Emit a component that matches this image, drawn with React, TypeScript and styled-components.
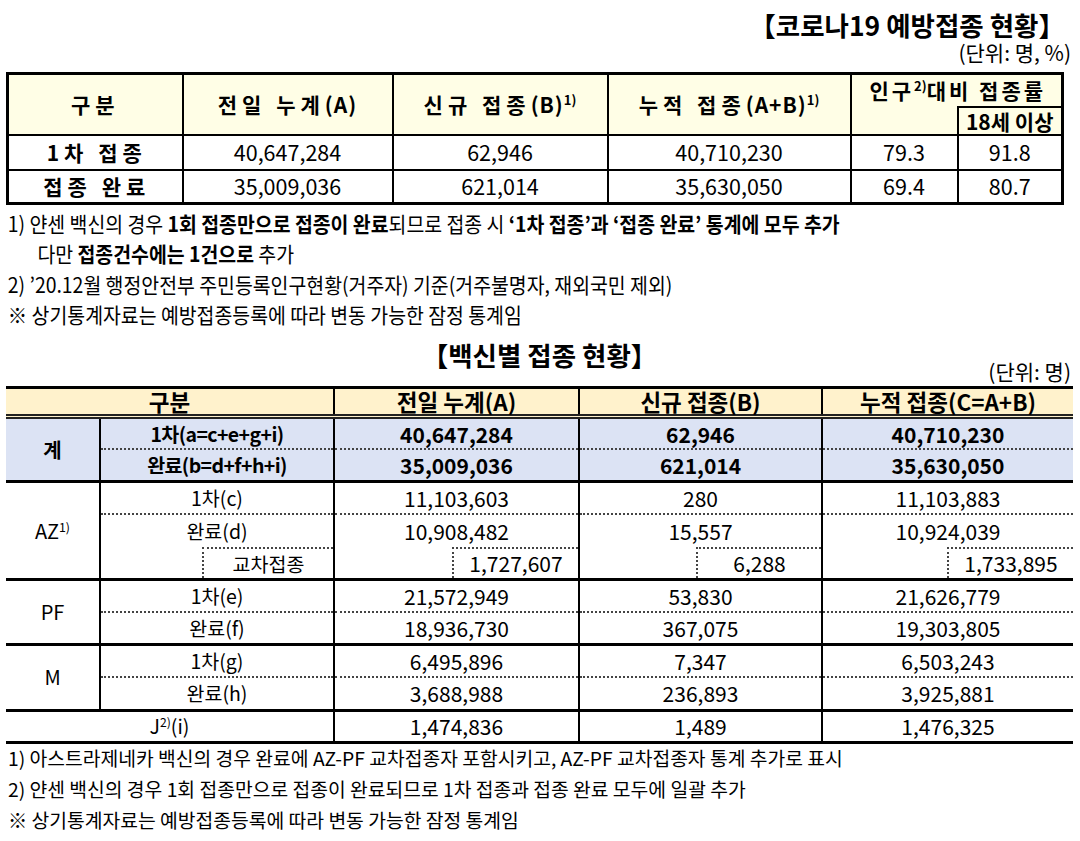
import React from "react";
import styled, { createGlobalStyle } from "styled-components";

const GlobalStyle = createGlobalStyle`
    html, body {
        margin: 0;
        padding: 0;
        background: #fff;
    }
    body {
        font-family: "Noto Sans CJK KR", "Noto Sans", sans-serif;
        color: #000;
    }
`;

const Page = styled.div`
    width: 1067px;
    padding: 10px 0 0 6px;
`;

const TopTitle = styled.div`
    padding-right: 8px;
    text-align: right;
    font-size: 26.5px;
    font-weight: 700;
    line-height: 30px;
`;

const Unit = styled.div`
    margin-top: 1px;
    padding-right: 2px;
    text-align: right;
    font-size: 21px;
    line-height: 22px;
`;

const Sup = styled.sup`
    font-size: 0.62em;
    line-height: 0;
    letter-spacing: 0;
    vertical-align: 0.6em;
`;

const Tight = styled.span`
    letter-spacing: 1px;
`;

/* ---------- summary table ---------- */

const SumTable = styled.table`
    width: 1055px;
    margin-top: 9px;
    border-collapse: collapse;
    table-layout: fixed;
    border: 3px solid #000;
`;

const SumRow = styled.tr<{ $h: number }>`
    height: ${(p) => p.$h}px;
`;

const SumHead = styled.th`
    padding: 0;
    border: 2px solid #000;
    background: #fffee6;
    font-size: 21px;
    font-weight: 700;
    line-height: 26px;
    letter-spacing: 5px;
    vertical-align: middle;
`;

const RateHead = styled(SumHead)`
    border-bottom: none;
    letter-spacing: 3px;
    padding-left: 3px;
`;

const BlankHead = styled.th`
    padding: 0;
    border-top: none;
    border-right: none;
    background: #fffee6;
    line-height: 20px;
`;

const AdultHead = styled.th`
    padding: 0;
    border: 2px solid #000;
    background: #fffee6;
    font-size: 21px;
    font-weight: 700;
    line-height: 24px;
`;

const SumLabel = styled.td`
    padding: 0 0 0 3px;
    border: 2px solid #000;
    text-align: center;
    font-size: 21px;
    font-weight: 700;
    line-height: 28px;
    letter-spacing: 5px;
`;

const SumValue = styled.td`
    padding: 0;
    border: 2px solid #000;
    text-align: center;
    font-size: 21.5px;
    line-height: 28px;
`;

/* ---------- notes ---------- */

const Notes = styled.div<{ $lh: number; $top: number; $size: number }>`
    margin-top: ${(p) => p.$top}px;
    font-size: ${(p) => p.$size}px;
    line-height: ${(p) => p.$lh}px;

    b {
        font-weight: 700;
    }
`;

const NoteLine = styled.div<{ $indent?: boolean; $narrow?: boolean }>`
    height: 1lh;
    padding-left: ${(p) => (p.$indent ? 34 : 2)}px;
    white-space: nowrap;
    transform: ${(p) => (p.$narrow ? "scaleX(0.924)" : "none")};
    transform-origin: left center;
`;

/* ---------- vaccine table ---------- */

const SectionHead = styled.div`
    display: grid;
    grid-template-columns: 1fr auto 1fr;
    height: 47px;
    margin-top: 10px;
`;

const SectionTitle = styled.div`
    grid-column: 2;
    align-self: start;
    font-size: 26.5px;
    font-weight: 700;
    line-height: 32px;
`;

const SectionUnit = styled.div`
    grid-column: 3;
    justify-self: end;
    align-self: end;
    margin-bottom: 4px;
    padding-right: 2px;
    font-size: 21px;
    line-height: 22px;
`;

const VaccineTable = styled.table`
    width: 1067px;
    border-collapse: collapse;
    table-layout: fixed;
    border-top: 3px solid #000;
    border-bottom: 3px solid #000;
`;

const VHead = styled.th`
    height: 25px;
    padding: 0;
    border-right: 2px solid #000;
    border-bottom: 5px double #222;
    background: #fff2cc;
    font-size: 22.5px;
    font-weight: 700;
    line-height: 25px;

    &:last-child {
        border-right: none;
    }
`;

const sepBorder = {
    group: "3px solid #000",
    dot: "2px dotted #444",
    none: "none",
};

const BodyRow = styled.tr<{ $sep: keyof typeof sepBorder; $total?: boolean }>`
    height: 32.6px;

    & > td {
        border-top: ${(p) => sepBorder[p.$sep]};
        background: ${(p) => (p.$total ? "#dce3f4" : "#fff")};
        font-weight: ${(p) => (p.$total ? 700 : 400)};
    }
`;

const Cell = styled.td`
    padding: 0;
    border-right: 2px solid #000;
    text-align: center;
    vertical-align: middle;
    font-size: 21px;
    line-height: 28px;

    &:last-child {
        border-right: none;
    }
`;

const LabelCell = styled(Cell)`
    font-size: 20px;
`;

const SubCell = styled(Cell)<{ $total?: boolean }>`
    font-size: 19.5px;
    letter-spacing: ${(p) => (p.$total ? "-0.6px" : "0")};
`;

const CrossCell = styled(Cell)`
    vertical-align: bottom;
`;

const CrossBox = styled.div<{ $w: number; $label?: boolean }>`
    box-sizing: border-box;
    width: ${(p) => p.$w}px;
    height: 31px;
    margin-left: auto;
    border-top: 2px dotted #444;
    border-left: 2px dotted #444;
    font-size: ${(p) => (p.$label ? "19.5px" : "21px")};
    line-height: 29px;
`;

/* ---------- data ---------- */

type Row = {
    sub: string;
    vals: string[];
    cross?: boolean;
};

type Group = {
    label: React.ReactNode;
    rows: Row[];
    total?: boolean;
};

const groups: Group[] = [
    {
        label: "계",
        total: true,
        rows: [
            { sub: "1차(a=c+e+g+i)", vals: ["40,647,284", "62,946", "40,710,230"] },
            { sub: "완료(b=d+f+h+i)", vals: ["35,009,036", "621,014", "35,630,050"] },
        ],
    },
    {
        label: (
            <>
                AZ<Sup>1)</Sup>
            </>
        ),
        rows: [
            { sub: "1차(c)", vals: ["11,103,603", "280", "11,103,883"] },
            { sub: "완료(d)", vals: ["10,908,482", "15,557", "10,924,039"] },
            { sub: "교차접종", vals: ["1,727,607", "6,288", "1,733,895"], cross: true },
        ],
    },
    {
        label: "PF",
        rows: [
            { sub: "1차(e)", vals: ["21,572,949", "53,830", "21,626,779"] },
            { sub: "완료(f)", vals: ["18,936,730", "367,075", "19,303,805"] },
        ],
    },
    {
        label: "M",
        rows: [
            { sub: "1차(g)", vals: ["6,495,896", "7,347", "6,503,243"] },
            { sub: "완료(h)", vals: ["3,688,988", "236,893", "3,925,881"] },
        ],
    },
];

// widths of the dotted "교차접종" boxes, per column
const crossWidths = [131, 126, 125, 126];

const App: React.FC = () => (
    <>
        <GlobalStyle />
        <Page>
            <TopTitle>【코로나19 예방접종 현황】</TopTitle>
            <Unit>(단위: 명, %)</Unit>

            <SumTable>
                <colgroup>
                    <col style={{ width: 175 }} />
                    <col style={{ width: 210 }} />
                    <col style={{ width: 215 }} />
                    <col style={{ width: 243 }} />
                    <col style={{ width: 107 }} />
                    <col style={{ width: 105 }} />
                </colgroup>
                <thead>
                    <SumRow $h={33}>
                        <SumHead rowSpan={2}>구분</SumHead>
                        <SumHead rowSpan={2}>
                            전일 누계<Tight>(A)</Tight>
                        </SumHead>
                        <SumHead rowSpan={2}>
                            신규 접종<Tight>(B)</Tight>
                            <Sup>1)</Sup>
                        </SumHead>
                        <SumHead rowSpan={2}>
                            누적 접종<Tight>(A+B)</Tight>
                            <Sup>1)</Sup>
                        </SumHead>
                        <RateHead colSpan={2}>
                            인구<Sup>2)</Sup>대비 접종률
                        </RateHead>
                    </SumRow>
                    <SumRow $h={28}>
                        <BlankHead />
                        <AdultHead>18세 이상</AdultHead>
                    </SumRow>
                </thead>
                <tbody>
                    <SumRow $h={35}>
                        <SumLabel>1차 접종</SumLabel>
                        <SumValue>40,647,284</SumValue>
                        <SumValue>62,946</SumValue>
                        <SumValue>40,710,230</SumValue>
                        <SumValue>79.3</SumValue>
                        <SumValue>91.8</SumValue>
                    </SumRow>
                    <SumRow $h={34}>
                        <SumLabel>접종 완료</SumLabel>
                        <SumValue>35,009,036</SumValue>
                        <SumValue>621,014</SumValue>
                        <SumValue>35,630,050</SumValue>
                        <SumValue>69.4</SumValue>
                        <SumValue>80.7</SumValue>
                    </SumRow>
                </tbody>
            </SumTable>

            <Notes $lh={30.3} $top={3} $size={21}>
                <NoteLine $narrow>
                    1) 얀센 백신의 경우 <b>1회 접종만으로 접종이 완료</b>되므로 접종 시{" "}
                    <b>‘1차 접종’과 ‘접종 완료’ 통계에 모두 추가</b>
                </NoteLine>
                <NoteLine $narrow $indent>
                    다만 <b>접종건수에는 1건으로</b> 추가
                </NoteLine>
                <NoteLine $narrow>
                    2) ’20.12월 행정안전부 주민등록인구현황(거주자) 기준(거주불명자, 재외국민 제외)
                </NoteLine>
                <NoteLine $narrow>※ 상기통계자료는 예방접종등록에 따라 변동 가능한 잠정 통계임</NoteLine>
            </Notes>

            <SectionHead>
                <SectionTitle>【백신별 접종 현황】</SectionTitle>
                <SectionUnit>(단위: 명)</SectionUnit>
            </SectionHead>

            <VaccineTable>
                <colgroup>
                    <col style={{ width: 94 }} />
                    <col style={{ width: 234 }} />
                    <col style={{ width: 245 }} />
                    <col style={{ width: 243 }} />
                    <col style={{ width: 251 }} />
                </colgroup>
                <thead>
                    <tr>
                        <VHead colSpan={2}>구분</VHead>
                        <VHead>전일 누계(A)</VHead>
                        <VHead>신규 접종(B)</VHead>
                        <VHead>누적 접종(C=A+B)</VHead>
                    </tr>
                </thead>
                <tbody>
                    {groups.map((g, gi) =>
                        g.rows.map((r, i) => (
                            <BodyRow
                                key={`${gi}-${i}`}
                                $sep={i === 0 ? "group" : r.cross ? "none" : "dot"}
                                $total={g.total}
                            >
                                {i === 0 && <LabelCell rowSpan={g.rows.length}>{g.label}</LabelCell>}
                                {r.cross ? (
                                    <CrossCell>
                                        <CrossBox $w={crossWidths[0]} $label>
                                            {r.sub}
                                        </CrossBox>
                                    </CrossCell>
                                ) : (
                                    <SubCell $total={g.total}>{r.sub}</SubCell>
                                )}
                                {r.vals.map((v, vi) =>
                                    r.cross ? (
                                        <CrossCell key={vi}>
                                            <CrossBox $w={crossWidths[vi + 1]}>{v}</CrossBox>
                                        </CrossCell>
                                    ) : (
                                        <Cell key={vi}>{v}</Cell>
                                    )
                                )}
                            </BodyRow>
                        ))
                    )}
                    <BodyRow $sep="group">
                        <SubCell colSpan={2}>
                            J<Sup>2)</Sup>(i)
                        </SubCell>
                        <Cell>1,474,836</Cell>
                        <Cell>1,489</Cell>
                        <Cell>1,476,325</Cell>
                    </BodyRow>
                </tbody>
            </VaccineTable>

            <Notes $lh={30.8} $top={-1} $size={19.3}>
                <NoteLine>
                    1) 아스트라제네카 백신의 경우 완료에 AZ-PF 교차접종자 포함시키고, AZ-PF 교차접종자 통계 추가로 표시
                </NoteLine>
                <NoteLine>2) 얀센 백신의 경우 1회 접종만으로 접종이 완료되므로 1차 접종과 접종 완료 모두에 일괄 추가</NoteLine>
                <NoteLine>※ 상기통계자료는 예방접종등록에 따라 변동 가능한 잠정 통계임</NoteLine>
            </Notes>
        </Page>
    </>
);

export default App;
